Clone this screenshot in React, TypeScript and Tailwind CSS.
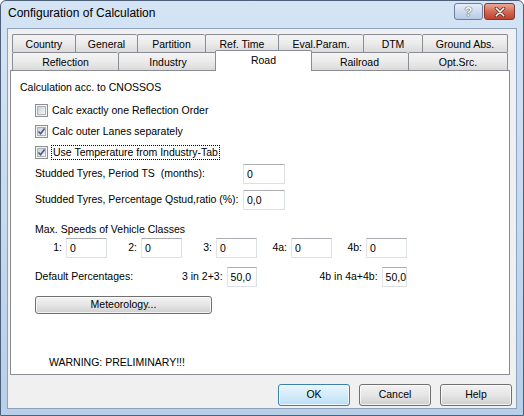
import React from 'react'

const row1 = [
  { label: 'Country', w: 63 },
  { label: 'General', w: 62 },
  { label: 'Partition', w: 68 },
  { label: 'Ref. Time', w: 73 },
  { label: 'Eval.Param.', w: 85 },
  { label: 'DTM', w: 59 },
  { label: 'Ground Abs.', w: 86 },
]

const row2 = [
  { label: 'Reflection', w: 106 },
  { label: 'Industry', w: 99 },
  { label: 'Road', w: 93, active: true },
  { label: 'Railroad', w: 98 },
  { label: 'Opt.Src.', w: 100 },
]

function Tab({ label, w, active, last }: { label: string; w: number; active?: boolean; last?: boolean }) {
  if (active) {
    return (
      <div
        className="relative z-10 -mx-[2px] -mb-px h-[21px] self-end rounded-t-[2px] border border-b-0 border-[#898c95] bg-white pt-[1px] text-center leading-[16px]"
        style={{ width: w + 4 }}
      >
        {label}
      </div>
    )
  }
  return (
    <div
      className={`h-[18px] rounded-t-[2px] border-t border-l border-[#898c95] bg-linear-to-b from-[#f4f4f4] via-[#ebebeb] to-[#dadada] pt-px text-center leading-[17px] ${last ? 'border-r' : ''}`}
      style={{ width: w }}
    >
      {label}
    </div>
  )
}

function Check({ checked }: { checked?: boolean }) {
  return (
    <span className="flex h-[13px] w-[13px] shrink-0 border border-[#8e8f8f] bg-[#f4f4f4] p-px">
      <span className="relative flex-1 border border-[#aeb3b9] bg-linear-to-br from-[#cbcfd5] to-[#f7f7f7]">
        {checked && (
          <svg viewBox="0 0 9 9" className="absolute -left-px -top-px h-[9px] w-[9px]">
            <path d="M1.5 4.5 L3.6 6.8 L7.6 1.6" fill="none" stroke="#4a5d8a" strokeWidth="1.7" />
          </svg>
        )}
      </span>
    </span>
  )
}

function Field({ value, w = 41 }: { value: string; w?: number }) {
  return (
    <div
      className="flex h-[20px] items-center border border-[#dbdfe6] border-t-[#abadb3] border-l-[#e2e3ea] bg-white pl-[3px] leading-[13px]"
      style={{ width: w }}
    >
      {value}
    </div>
  )
}

function WinButton({ children, def, w = 72 }: { children: React.ReactNode; def?: boolean; w?: number }) {
  return (
    <div
      className={`flex h-[22px] items-center justify-center rounded-[3px] border ${
        def
          ? 'border-[#3c7fb1] bg-linear-to-b from-[#eaf6fd] via-[#d5ecfa] to-[#b9def4]'
          : 'border-[#707070] bg-linear-to-b from-[#f2f2f2] via-[#e6e6e6] to-[#cfcfcf]'
      } shadow-[inset_0_0_0_1px_rgba(255,255,255,0.7)]`}
      style={{ width: w }}
    >
      {children}
    </div>
  )
}

export default function App() {
  return (
    <div className="h-[416px] w-[524px] overflow-hidden bg-white text-[10.5px] text-black [font-family:'Liberation_Sans',Arial,sans-serif]">
      <div className="flex h-full w-full flex-col rounded-t-[6px] border border-[#4d6078] bg-linear-to-b from-[#d4e4f5] via-[#c6daf0] to-[#b8cfea]">
        {/* title bar */}
        <div className="flex h-[27px] shrink-0 items-start">
          <span className="mt-[4px] ml-[7px] flex-1 text-[12px] leading-[16px]">Configuration of Calculation</span>
          <div className="mt-[2px] mr-[8px] flex gap-px">
            <div className="flex h-[17px] w-[29px] items-center justify-center rounded-[3px] border border-[#6d7fa0] bg-linear-to-b from-[#e6eef8] via-[#cfdcee] to-[#b6c9e3] text-[13px] font-bold leading-none text-white [text-shadow:0_0_1px_#2c3a55,0_0_1px_#2c3a55]">
              ?
            </div>
            <div className="flex h-[17px] w-[31px] items-center justify-center rounded-[3px] border border-[#7e3a31] bg-linear-to-b from-[#e9a99a] via-[#d46a55] to-[#c0402b]">
              <svg viewBox="0 0 14 12" className="h-[10px] w-[12px]">
                <path d="M2.5 1.5 L11.5 10.5 M11.5 1.5 L2.5 10.5" stroke="#4a1e18" strokeWidth="3.6" strokeLinecap="round" />
                <path d="M2.5 1.5 L11.5 10.5 M11.5 1.5 L2.5 10.5" stroke="#ffffff" strokeWidth="2" strokeLinecap="round" />
              </svg>
            </div>
          </div>
        </div>

        {/* client area */}
        <div className="mx-[6px] mb-[6px] flex flex-1 flex-col border border-[#8ea3bb] bg-[#f0f0f0]">
          {/* tab strip */}
          <div className="ml-[4px] pt-[5px]">
            <div className="flex">
              {row1.map((t, i) => (
                <Tab key={t.label} label={t.label} w={t.w} last={i === row1.length - 1} />
              ))}
            </div>
            <div className="flex h-[18px]">
              {row2.map((t, i) => (
                <Tab key={t.label} label={t.label} w={t.w} active={t.active} last={i === row2.length - 1} />
              ))}
            </div>
          </div>

          {/* tab panel */}
          <div className="ml-[2px] flex h-[305px] w-[500px] flex-col border border-[#898c95] bg-white pl-[9px]">
            <div className="mt-[10px] h-[13px] leading-[13px]">Calculation acc. to CNOSSOS</div>

            <div className="mt-[6px] flex flex-col pl-[15px]">
              <div className="flex h-[21px] items-center gap-[4px]">
                <Check />
                <span>Calc exactly one Reflection Order</span>
              </div>
              <div className="flex h-[21px] items-center gap-[4px]">
                <Check checked />
                <span>Calc outer Lanes separately</span>
              </div>
              <div className="flex h-[21px] items-center gap-[3px]">
                <Check checked />
                <span className="border border-dotted border-black px-px leading-[13px]">Use Temperature from Industry-Tab</span>
              </div>
            </div>

            <div className="mt-[1px] flex h-[20px] items-center pl-[15px]">
              <span className="w-[208px]">Studded Tyres, Period TS&nbsp; (months):</span>
              <Field value="0" w={42} />
            </div>
            <div className="mt-[6px] flex h-[20px] items-center pl-[15px]">
              <span className="w-[208px] whitespace-nowrap">Studded Tyres, Percentage Qstud,ratio (%):</span>
              <Field value="0,0" w={42} />
            </div>

            <div className="mt-[13px] h-[13px] pl-[15px] leading-[13px]">Max. Speeds of Vehicle Classes</div>

            <div className="mt-[2px] grid grid-cols-[repeat(5,75px)] pl-[12px]">
              {['1:', '2:', '3:', '4a:', '4b:'].map((l) => (
                <div key={l} className="flex items-center justify-end gap-[4px]">
                  <span>{l}</span>
                  <Field value="0" />
                </div>
              ))}
            </div>

            <div className="mt-[9px] grid grid-cols-[repeat(5,75px)] pl-[12px]">
              <div className="col-span-2 flex items-center pl-[3px]">Default Percentages:</div>
              <div className="flex items-center justify-end gap-[4px] whitespace-nowrap">
                <span>3 in 2+3:</span>
                <Field value="50,0" />
              </div>
              <div />
              <div className="flex items-center justify-end gap-[4px] whitespace-nowrap">
                <span>4b in 4a+4b:</span>
                <Field value="50,0" />
              </div>
            </div>

            <div className="mt-[9px] pl-[15px]">
              <div className="flex h-[18px] w-[177px] items-center justify-center rounded-[3px] border border-[#707070] bg-linear-to-b from-[#f2f2f2] via-[#e6e6e6] to-[#cfcfcf] shadow-[inset_0_0_0_1px_rgba(255,255,255,0.7)]">
                Meteorology...
              </div>
            </div>

            <div className="mt-[42px] h-[13px] pl-[29px] leading-[13px]">WARNING: PRELIMINARY!!!</div>
          </div>

          {/* dialog buttons */}
          <div className="mt-[9px] mr-[4px] flex justify-end gap-[9px]">
            <WinButton def>OK</WinButton>
            <WinButton>Cancel</WinButton>
            <WinButton>Help</WinButton>
          </div>
        </div>
      </div>
    </div>
  )
}
